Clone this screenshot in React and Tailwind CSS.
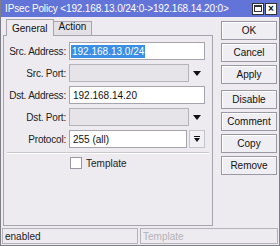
import React from "react";

const font = { fontFamily: '"Liberation Sans", Arial, sans-serif' };

function Btn({ children, className = "" }) {
  return (
    <div
      className={
        "h-[19px] w-[56px] flex items-center justify-center border border-[#9a99a3] bg-[#efeef2] text-[10px] text-[#111] shadow-[inset_1px_1px_0_#ffffff] " +
        className
      }
    >
      {children}
    </div>
  );
}

function Arrow() {
  return (
    <svg width="8" height="5" viewBox="0 0 8 5" className="block">
      <path d="M0 0H8L4 5Z" fill="#111" />
    </svg>
  );
}

function Row({ label, children }) {
  return (
    <div className="flex items-center h-[18px]">
      <div className="w-[65px] pr-[3px] text-right text-[10px] text-[#222] tracking-[-0.2px]">{label}</div>
      {children}
    </div>
  );
}

export default function App() {
  return (
    <div className="w-[280px] h-[246px] bg-[#edebf0] flex flex-col overflow-hidden border-x border-b border-[#7d7d86]" style={font}>
      {/* title bar */}
      <div className="h-[17px] bg-[#6374d8] flex items-center pl-[4px] pr-[2px] shrink-0">
        <div className="flex-1 text-white text-[10px] whitespace-nowrap tracking-[-0.15px]">
          IPsec Policy &lt;192.168.13.0/24:0-&gt;192.168.14.20:0&gt;
        </div>
        <div className="flex gap-[1px]">
          <div className="w-[12px] h-[12px] bg-white border border-[#333] flex items-center justify-center">
            <div className="w-[8px] h-[7px] border border-[#333] border-t-2"></div>
          </div>
          <div className="w-[12px] h-[12px] bg-white border border-[#333] flex items-center justify-center text-[10px] font-bold leading-none text-[#111]">
            ×
          </div>
        </div>
      </div>

      <div className="flex flex-1">
        {/* left */}
        <div className="w-[219px] flex flex-col pl-[2px]">
          <div className="flex items-end h-[18px] pl-[3px]">
            <div className="h-[17px] px-[5px] border border-b-0 border-[#a6a5ad] bg-[#edebf0] text-[10px] text-[#111] flex items-center relative top-[1px] z-10">
              General
            </div>
            <div className="h-[14px] px-[5px] border border-b-0 border-l-0 border-[#a6a5ad] bg-[#e3e1e6] text-[10px] text-[#111] flex items-end pb-[1px]">
              Action
            </div>
          </div>
          <div className="w-[210px] h-[191px] border border-[#a6a5ad] flex flex-col pt-[6px]">
            <div className="flex flex-col gap-[4px]">
              <Row label="Src. Address:">
                <div className="w-[136px] h-[18px] bg-white border border-[#a6a5ad] flex items-center pl-[1px]">
                  <span className="bg-[#3a8ee6] text-white text-[10px] px-[1px] leading-[13px]">192.168.13.0/24</span>
                </div>
              </Row>
              <Row label="Src. Port:">
                <div className="w-[120px] h-[18px] bg-[#e6e4e9] border border-[#b4b3ba]"></div>
                <div className="w-[16px] flex justify-center"><Arrow /></div>
              </Row>
              <Row label="Dst. Address:">
                <div className="w-[136px] h-[18px] bg-white border border-[#a6a5ad] flex items-center pl-[3px] text-[10px] text-[#111]">
                  192.168.14.20
                </div>
              </Row>
              <Row label="Dst. Port:">
                <div className="w-[120px] h-[18px] bg-[#e6e4e9] border border-[#b4b3ba]"></div>
                <div className="w-[16px] flex justify-center"><Arrow /></div>
              </Row>
              <Row label="Protocol:">
                <div className="w-[118px] h-[18px] bg-white border border-[#a6a5ad] flex items-center pl-[3px] text-[10px] text-[#111]">
                  255 (all)
                </div>
                <div className="ml-[2px] w-[16px] h-[18px] border border-[#c4c3ca] bg-[#f1f0f4] flex flex-col items-center justify-center gap-[1px]">
                  <div className="w-[6px] h-[1px] bg-[#111]"></div>
                  <svg width="6" height="4" viewBox="0 0 6 4"><path d="M0 0H6L3 4Z" fill="#111" /></svg>
                </div>
              </Row>
            </div>
            <div className="mt-[4px] mx-[3px] h-[2px] border-t border-[#c9c8ce] border-b border-b-white"></div>
            <div className="flex items-center mt-[2px] pl-[66px] h-[14px]">
              <div className="w-[12px] h-[12px] bg-white border border-[#9a99a3]"></div>
              <span className="ml-[4px] text-[10px] text-[#222]">Template</span>
            </div>
          </div>
        </div>

        {/* right buttons */}
        <div className="flex flex-col pt-[4px] pl-[1px]">
          <div className="flex flex-col gap-[3px]">
            <Btn>OK</Btn>
            <Btn>Cancel</Btn>
            <Btn>Apply</Btn>
          </div>
          <div className="flex flex-col gap-[3px] mt-[6px]">
            <Btn>Disable</Btn>
            <Btn>Comment</Btn>
            <Btn>Copy</Btn>
            <Btn>Remove</Btn>
          </div>
        </div>
      </div>

      {/* status bar */}
      <div className="h-[17px] flex gap-[2px] px-[1px] pb-[1px] shrink-0">
        <div className="w-[136px] border border-[#b4b3ba] text-[10px] text-[#222] flex items-center pl-[2px]">enabled</div>
        <div className="flex-1 border border-[#b4b3ba] text-[10px] text-[#b3b2b8] flex items-center pl-[2px]">Template</div>
      </div>
    </div>
  );
}
